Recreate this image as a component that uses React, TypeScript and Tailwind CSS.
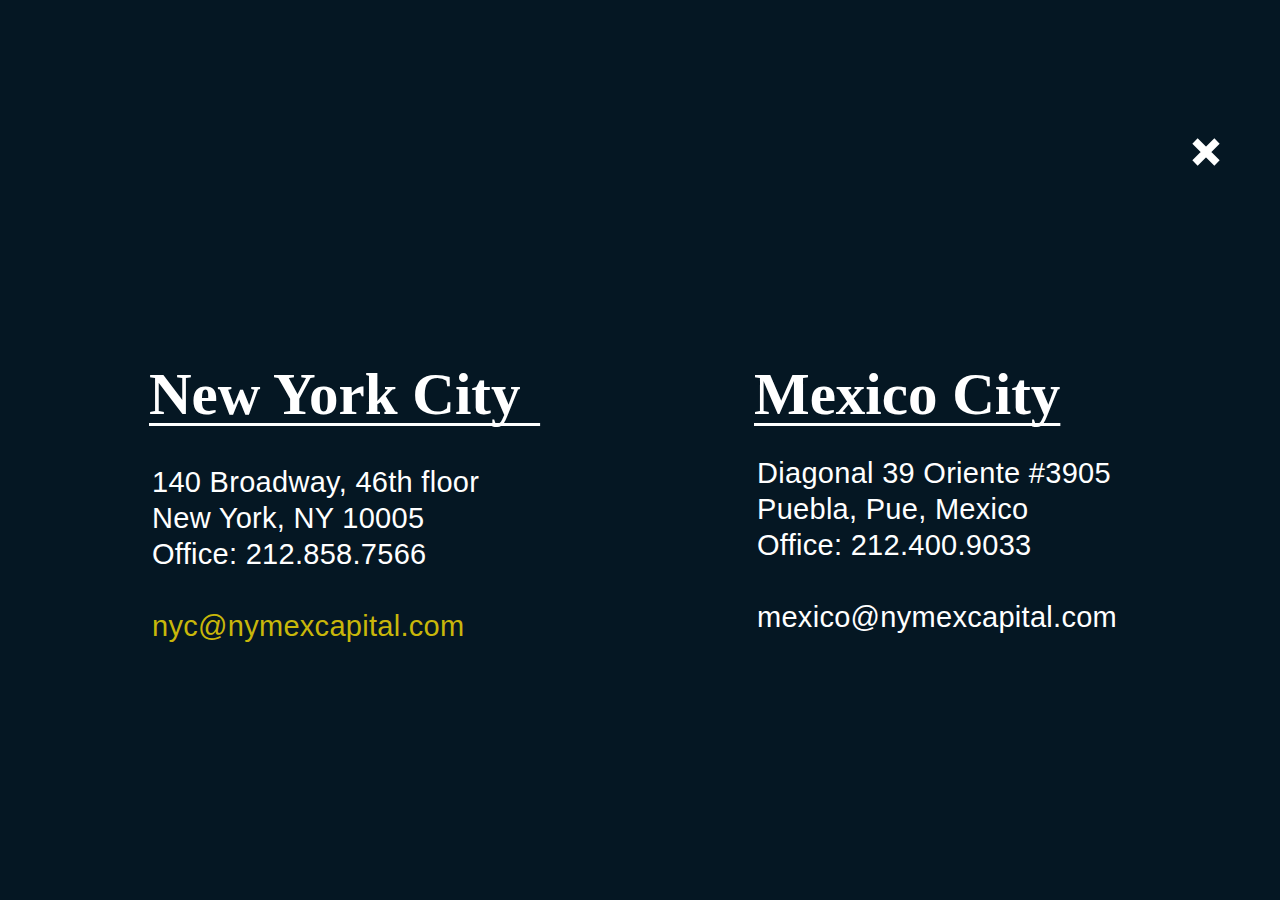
export default function App() {
  const offices = [
    {
      city: "New York City\u00a0\u200a",
      lines: ["140 Broadway, 46th floor", "New York, NY 10005", "Office: 212.858.7566"],
      email: "nyc@nymexcapital.com",
      emailClass: "text-[#c9b70a]",
      bodyGap: "mt-[40px]",
    },
    {
      city: "Mexico City",
      lines: ["Diagonal 39 Oriente #3905", "Puebla, Pue, Mexico", "Office: 212.400.9033"],
      email: "mexico@nymexcapital.com",
      emailClass: "text-white",
      bodyGap: "mt-[31px]",
    },
  ]

  return (
    <div className="relative min-h-screen w-full bg-[#051723] text-white">
      {/* close button */}
      <button className="absolute top-[136px] right-[58px] w-8 h-8" aria-label="Close">
        <svg viewBox="0 0 32 32" className="w-8 h-8">
          <path d="M5 5 L27 27 M27 5 L5 27" stroke="white" strokeWidth="7.5" />
        </svg>
      </button>

      <div className="grid grid-cols-[605px_1fr] pl-[149px] pt-[365px]">
        {offices.map((o) => (
          <div key={o.email}>
            <h2 className="font-['Liberation_Serif',serif] font-bold text-[59px] leading-none underline decoration-[3px] underline-offset-[9px] [text-decoration-skip-ink:none] whitespace-pre">
              {o.city}
            </h2>
            <div
              className={`${o.bodyGap} pl-[3px] font-['Liberation_Sans',Arial,sans-serif] text-[29px] leading-[36px] tracking-[0.01em]`}
            >
              {o.lines.map((l) => (
                <p key={l}>{l}</p>
              ))}
              <p className={`mt-[36px] ${o.emailClass}`}>{o.email}</p>
            </div>
          </div>
        ))}
      </div>
    </div>
  )
}
